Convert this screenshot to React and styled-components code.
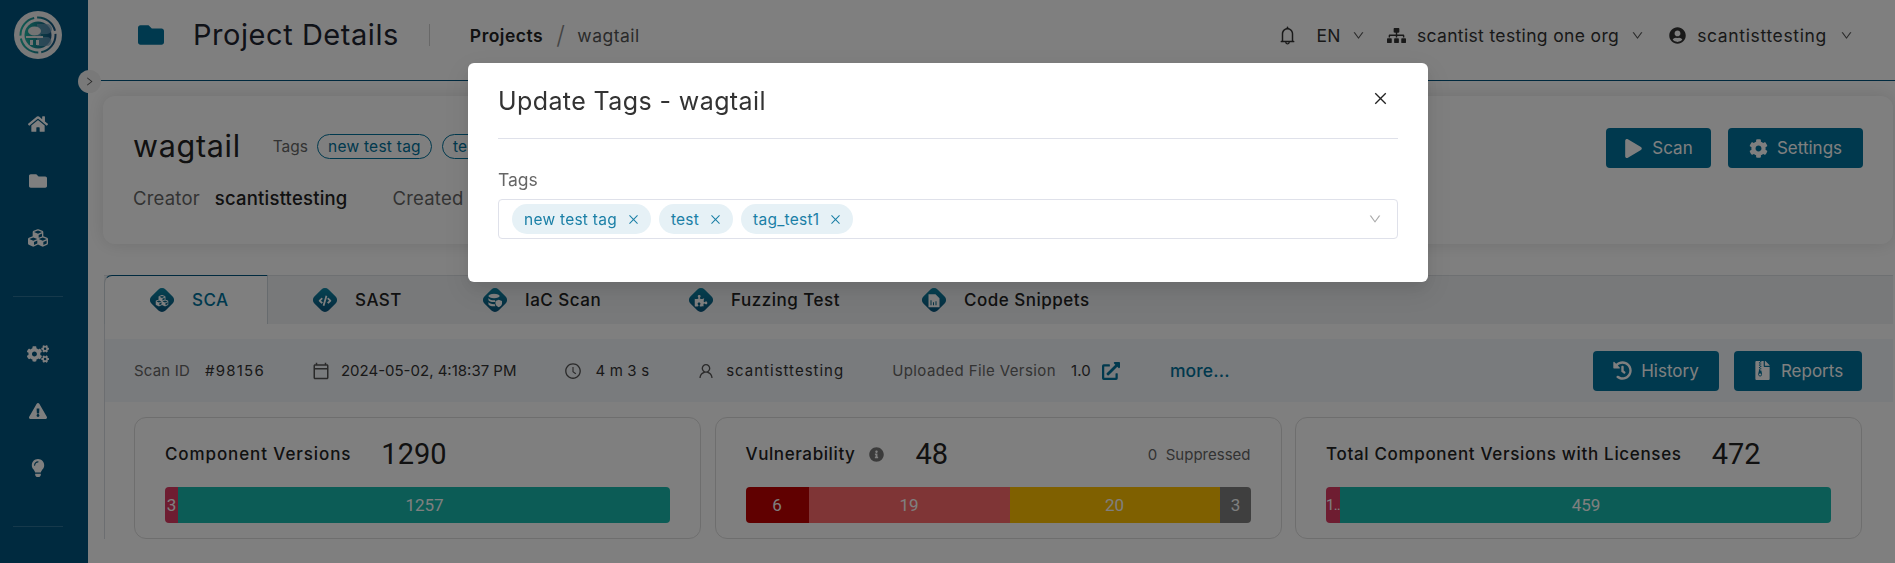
import React from 'react';
import styled, { createGlobalStyle } from 'styled-components';
import {
  FaHome, FaFolder, FaCubes, FaCogs, FaExclamationTriangle, FaLightbulb, FaPlay, FaCog, FaHistory,
  FaFileArchive, FaSitemap, FaUserCircle, FaInfoCircle, FaExternalLinkAlt, FaCode,
  FaPuzzlePiece,
} from 'react-icons/fa';
import { AiOutlineBell, AiOutlineDown, AiOutlineClose, AiOutlineClockCircle, AiOutlineUser, AiOutlineRight } from 'react-icons/ai';
import { MdOutlineCalendarToday } from 'react-icons/md';

const brand = '#00729c';
const navy = '#00547e';

const GlobalStyle = createGlobalStyle`
  html, body { margin: 0; height: 100%; overflow: hidden; }
  body { font-family: Inter, "Liberation Sans", sans-serif; color: #222; background: #fff; }
  * { box-sizing: border-box; }
`;

const Page = styled.div`
  display: flex;
  width: 1895px;
  height: 563px;
  overflow: hidden;
`;

// side navigation
const Sidebar = styled.aside`
  flex: 0 0 88px;
  background: ${navy};
  padding: 11px 13px 0 0;
  color: #fff;
`;

const LogoSlot = styled.div`
  display: flex;
  justify-content: center;
  height: 84.5px;
`;

const NavItem = styled.div`
  height: 57px;
  display: flex;
  align-items: center;
  justify-content: center;
  font-size: ${p => p.$size || 18}px;
`;

const NavDivider = styled.div`
  height: 59px;
  display: flex;
  align-items: center;
  justify-content: center;
  &::before {
    content: '';
    width: 50px;
    height: 1px;
    background: #2c7396;
  }
`;

const Main = styled.main`
  flex: 1;
  min-width: 0;
  position: relative;
`;

const Toggle = styled.div`
  position: absolute;
  left: -10px;
  top: 70px;
  width: 23px;
  height: 23px;
  border-radius: 50%;
  background: #f2f2f2;
  color: #555;
  font-size: 11px;
  display: flex;
  align-items: center;
  justify-content: center;
`;

// top bar
const Header = styled.header`
  height: 81px;
  margin-left: 13px;
  padding: 0 42px 10px 37px;
  border-bottom: 1px solid ${navy};
  display: flex;
  align-items: center;
`;

const TitleIcon = styled.span`
  color: ${brand};
  font-size: 26px;
  display: flex;
  margin-right: 29px;
`;

const Title = styled.h1`
  margin: 0;
  font-size: 29px;
  font-weight: 400;
  letter-spacing: 0.55px;
  color: #1f2430;
  padding-right: 30px;
  border-right: 1px solid #d0d0d0;
  line-height: 22px;
`;

const Crumbs = styled.div`
  margin-left: 40px;
  display: flex;
  align-items: center;
  font-size: 17.5px;
  letter-spacing: 0.5px;
`;

const CrumbStrong = styled.b`
  font-weight: 600;
  color: #222;
`;

const CrumbSlash = styled.span`
  margin: 0 12px 0 13px;
  font-size: 25px;
  font-weight: 300;
  color: #888;
  line-height: 20px;
`;

const CrumbText = styled.span`
  color: #555;
`;

const HeaderRight = styled.div`
  margin-left: auto;
  display: flex;
  align-items: center;
  font-size: 17.5px;
  color: #333;
`;

const HeaderItem = styled.div`
  display: flex;
  align-items: center;
  gap: 11px;
  letter-spacing: ${p => p.$track || 0.4}px;
  margin-left: ${p => p.$left || 0}px;
  svg { flex: none; }
`;

const Caret = styled(AiOutlineDown)`
  font-size: 13px;
  color: #555;
  margin-left: ${p => p.$left || 0}px;
`;

const Content = styled.div`
  padding: 15px 2px 0 15px;
`;

// project card
const ProjectCard = styled.section`
  height: 148px;
  background: #fff;
  border-radius: 12px;
  box-shadow: 0 0 18px rgba(0, 0, 0, 0.12);
  padding: 30px 30px 0 30px;
  display: flex;
  justify-content: space-between;
`;

const ProjectInfo = styled.div`
  display: flex;
  flex-direction: column;
  gap: 21px;
`;

const NameRow = styled.div`
  display: flex;
  align-items: center;
`;

const ProjectName = styled.div`
  font-size: 30.5px;
  letter-spacing: 0.7px;
  color: #222;
  margin-right: 32px;
  line-height: 40px;
`;

const TagsLabel = styled.span`
  font-size: 15.5px;
  color: #666;
  margin-right: 9px;
`;

const OutlineTag = styled.span`
  height: 25px;
  padding: 0 10px;
  border: 1px solid ${brand};
  border-radius: 13px;
  font-size: 15.5px;
  letter-spacing: 0.25px;
  color: ${brand};
  display: flex;
  align-items: center;
  margin-right: 10px;
`;

const MetaRow = styled.div`
  display: flex;
  align-items: center;
  font-size: 18.5px;
  letter-spacing: 0.2px;
  color: #222;
`;

const MetaLabel = styled.span`
  color: #666;
  margin-right: ${p => p.$gap || 15}px;
`;

const MetaValue = styled.span`
  margin-right: 45px;
  font-weight: 500;
`;

const Buttons = styled.div`
  display: flex;
  gap: ${p => p.$gap || 17}px;
  padding-top: ${p => p.$top || 2}px;
`;

const Button = styled.button`
  height: 40px;
  width: ${p => p.$width}px;
  border: 0;
  border-radius: 4px;
  background: ${brand};
  color: #fff;
  font: inherit;
  font-size: 17px;
  letter-spacing: 0;
  display: flex;
  align-items: center;
  justify-content: center;
  gap: 9px;
  svg { font-size: 19px; }
`;

// tabs
const TabBar = styled.div`
  margin-top: 31px;
  margin-left: 1px;
  height: 49px;
  display: flex;
  background: #f0f2f4;
  border-top: 1px solid #dde0e4;
`;

const Tab = styled.div`
  width: ${p => p.$width}px;
  flex: none;
  display: flex;
  align-items: center;
  gap: 17px;
  padding-left: ${p => p.$pad || 44}px;
  font-size: 17px;
  letter-spacing: 0.5px;
  font-weight: 500;
  color: ${p => (p.$active ? brand : '#222')};
  background: ${p => (p.$active ? '#fff' : 'transparent')};
  border: ${p => (p.$active ? '1px solid #cfd6dc' : '0')};
  border-top-color: ${navy};
  border-bottom: 0;
  border-radius: 8px 0 0 0;
  margin-top: ${p => (p.$active ? '-1px' : '0')};
`;

const Diamond = styled.span`
  flex: none;
  width: 20px;
  height: 20px;
  margin: 0 3px;
  border-radius: 5px;
  transform: rotate(45deg);
  background: linear-gradient(135deg, #0d8aa8, #0a4f78);
  display: flex;
  align-items: center;
  justify-content: center;
  color: #fff;
  font-size: 13px;
  svg { transform: rotate(-45deg); }
`;

const TabBody = styled.div`
  margin-left: 1px;
  border-left: 1px solid #d8dde2;
  padding-top: 15px;
`;

const ScanRow = styled.div`
  height: 63px;
  background: #f3f6fa;
  padding: 0 31px 0 29px;
  display: flex;
  align-items: center;
  font-size: 15px;
  letter-spacing: 0.15px;
  color: #333;
`;

const ScanLabel = styled.span`
  color: #666;
  letter-spacing: ${p => p.$track || 0.2}px;
  margin-right: ${p => p.$gap || 15}px;
`;

const ScanItem = styled.span`
  display: flex;
  align-items: center;
  gap: ${p => p.$gap || 11}px;
  letter-spacing: ${p => p.$track ?? 0.15}px;
  margin-right: ${p => p.$right || 0}px;
  svg { font-size: 18px; color: #555; flex: none; }
`;

const LinkIcon = styled(FaExternalLinkAlt)`
  && { color: ${brand}; }
`;

const MoreLink = styled.span`
  font-size: 17.5px;
  color: ${brand};
  font-weight: 500;
  margin-left: 50px;
`;

const ScanButtons = styled(Buttons)`
  margin-left: auto;
  gap: 15px;
  padding-top: 0;
`;

const Stats = styled.div`
  display: grid;
  grid-template-columns: repeat(3, 567px);
  gap: 13.5px;
  padding: 15px 0 0 29px;
`;

const StatCard = styled.div`
  height: 122px;
  border: 1px solid #ddd;
  border-radius: 12px;
  padding: 18px 30px 0;
`;

const StatHead = styled.div`
  height: 36px;
  display: flex;
  align-items: center;
`;

const StatLabel = styled.span`
  font-size: 17px;
  letter-spacing: ${p => p.$track || 0.67}px;
  font-weight: 500;
  color: #222;
  margin-right: ${p => p.$gap || 30}px;
`;

const InfoIcon = styled(FaInfoCircle)`
  font-size: 15px;
  color: #777;
  margin-right: 32px;
`;

const StatValue = styled.span`
  font-family: Roboto, sans-serif;
  font-size: 29px;
  color: #222;
`;

const Suppressed = styled.span`
  margin-left: auto;
  font-size: 15px;
  color: #666;
`;

const Bar = styled.div`
  margin-top: 15px;
  height: 36px;
  display: flex;
  border-radius: 4px;
  overflow: hidden;
`;

const Segment = styled.div`
  flex: 0 0 ${p => p.$width}px;
  background: ${p => p.$color};
  color: #fff;
  font-family: Roboto, sans-serif;
  font-size: ${p => (p.$tight ? 15 : 17)}px;
  letter-spacing: ${p => (p.$tight ? '-0.8px' : '0')};
  display: flex;
  align-items: center;
  justify-content: center;
  overflow: hidden;
`;

// modal over the dimmed page
const Backdrop = styled.div`
  position: fixed;
  inset: 0;
  background: rgba(0, 0, 0, 0.5);
`;

const Modal = styled.div`
  position: absolute;
  left: 468px;
  top: 63px;
  width: 960px;
  height: 219px;
  background: #fff;
  border-radius: 6px;
  padding: 0 30px;
  box-shadow: 0 6px 16px rgba(0, 0, 0, 0.08), 0 9px 28px 8px rgba(0, 0, 0, 0.05);
`;

const ModalHead = styled.div`
  height: 76px;
  border-bottom: 1px solid #dfe1ea;
  display: flex;
  align-items: center;
  justify-content: space-between;
`;

const ModalTitle = styled.h2`
  margin: 0;
  font-size: 25px;
  font-weight: 400;
  letter-spacing: 0.4px;
  color: #333;
`;

const CloseButton = styled(AiOutlineClose)`
  font-size: 17px;
  color: #222;
  margin-right: 9px;
  margin-top: -5px;
`;

const FieldLabel = styled.div`
  margin-top: 29px;
  font-size: 17.5px;
  line-height: 24px;
  color: #666;
`;

const SelectBox = styled.div`
  margin-top: 7px;
  height: 40px;
  border: 1px solid #dfe1ea;
  border-radius: 4px;
  padding: 0 15px 0 13px;
  display: flex;
  align-items: center;
  gap: 8px;
`;

const Chip = styled.span`
  height: 30px;
  padding: 0 11px 0 12px;
  border-radius: 15px;
  background: #e6f1f6;
  color: #1a7fa6;
  font-size: 15.5px;
  letter-spacing: 0.25px;
  display: flex;
  align-items: center;
  gap: 10px;
  svg { font-size: 13px; }
`;

const SelectCaret = styled(AiOutlineDown)`
  margin-left: auto;
  font-size: 14px;
  color: #aaa;
`;

const Logo = () => (
  <svg width="48" height="48" viewBox="0 0 48 48">
    <defs>
      <linearGradient id="logoFill" x1="0" x2="1" y1="0" y2="0">
        <stop offset="0" stopColor="#1fb5a3" />
        <stop offset="1" stopColor="#14527f" />
      </linearGradient>
    </defs>
    <circle cx="24" cy="24" r="24" fill="#f2f2f2" />
    <circle cx="24" cy="24" r="17.5" fill="none" stroke="url(#logoFill)" strokeWidth="2" strokeDasharray="24 3" />
    <circle cx="24" cy="24" r="13.5" fill="url(#logoFill)" />
    <path d="M23 13h10a3 3 0 0 1 0 10h-6a3 3 0 0 0 0 3h6a4 4 0 0 1 0 9H23z" fill="#6f9fbc" opacity="0.7" />
    <ellipse cx="20.5" cy="20" rx="6.5" ry="4.5" fill="#e9e9e9" />
    <rect x="12" y="25" width="17" height="2" fill="#e9e9e9" />
    <path d="M16 29h3v5h-3zM22 29h3v5h-3z" fill="#e9e9e9" />
  </svg>
);

const IacIcon = () => (
  <svg width="15" height="15" viewBox="0 0 16 16" fill="currentColor">
    <ellipse cx="7" cy="3" rx="6" ry="2.4" />
    <path d="M1 5v2.2c0 1.3 2.7 2.3 6 2.3h1V7.6H7C4 7.6 1.9 6.5 1 5zM1 9.4v2.4C1 13.1 3.7 14 7 14h1.4A5 5 0 0 1 8 11.8H7C4 11.8 1.9 10.8 1 9.4z" />
    <path d="M12 7l3.5 1.2v2.6c0 2-1.6 3.6-3.5 4.2-1.9-.6-3.5-2.2-3.5-4.2V8.2z" />
  </svg>
);

const SnippetIcon = () => (
  <svg width="13" height="15" viewBox="0 0 13 15" fill="currentColor">
    <path d="M1 1h7l4 4v9H1zM4 7H3v5h1zm2.5 2h-1v3h1zM9 8H8v4h1z" fillRule="evenodd" />
  </svg>
);

const tabs = [
  { label: 'SCA', icon: <FaCubes />, width: 164, active: true },
  { label: 'SAST', icon: <FaCode />, width: 193, pad: 44 },
  { label: 'IaC Scan', icon: <IacIcon />, width: 206, pad: 21 },
  { label: 'Fuzzing Test', icon: <FaPuzzlePiece />, width: 233, pad: 21 },
  { label: 'Code Snippets', icon: <SnippetIcon />, width: 260, pad: 21 },
];

const App = () => (
  <>
    <GlobalStyle />
    <Page>
      <Sidebar>
        <LogoSlot><Logo /></LogoSlot>
        <NavItem $size={20}><FaHome /></NavItem>
        <NavItem><FaFolder /></NavItem>
        <NavItem $size={20}><FaCubes /></NavItem>
        <NavDivider />
        <NavItem $size={22}><FaCogs /></NavItem>
        <NavItem><FaExclamationTriangle /></NavItem>
        <NavItem><FaLightbulb /></NavItem>
        <NavDivider />
      </Sidebar>
      <Main>
        <Toggle><AiOutlineRight /></Toggle>
        <Header>
          <TitleIcon><FaFolder /></TitleIcon>
          <Title>Project Details</Title>
          <Crumbs>
            <CrumbStrong>Projects</CrumbStrong>
            <CrumbSlash>/</CrumbSlash>
            <CrumbText>wagtail</CrumbText>
          </Crumbs>
          <HeaderRight>
            <HeaderItem><AiOutlineBell size={21} /></HeaderItem>
            <HeaderItem $left={18}>EN<Caret /></HeaderItem>
            <HeaderItem $left={22} $track={0.35}><FaSitemap size={19} />scantist testing one org<Caret $left={1} /></HeaderItem>
            <HeaderItem $left={25} $track={0.65}><FaUserCircle size={17} />scantisttesting<Caret $left={2} /></HeaderItem>
          </HeaderRight>
        </Header>
        <Content>
          <ProjectCard>
            <ProjectInfo>
              <NameRow>
                <ProjectName>wagtail</ProjectName>
                <TagsLabel>Tags</TagsLabel>
                <OutlineTag>new test tag</OutlineTag>
                <OutlineTag>test</OutlineTag>
              </NameRow>
              <MetaRow>
                <MetaLabel>Creator</MetaLabel>
                <MetaValue>scantisttesting</MetaValue>
                <MetaLabel>Created</MetaLabel>
              </MetaRow>
            </ProjectInfo>
            <Buttons>
              <Button $width={105}><FaPlay />Scan</Button>
              <Button $width={135}><FaCog />Settings</Button>
            </Buttons>
          </ProjectCard>
          <TabBar>
            {tabs.map(t => (
              <Tab key={t.label} $width={t.width} $active={t.active} $pad={t.pad}>
                <Diamond>{t.icon}</Diamond>
                {t.label}
              </Tab>
            ))}
          </TabBar>
          <TabBody>
            <ScanRow>
              <ScanLabel>Scan ID</ScanLabel>
              <ScanItem $right={47} $track={1.2}>#98156</ScanItem>
              <ScanItem $right={48} $track={0}><MdOutlineCalendarToday />2024-05-02, 4:18:37 PM</ScanItem>
              <ScanItem $right={48} $gap={13}><AiOutlineClockCircle />4 m 3 s</ScanItem>
              <ScanItem $right={48} $track={1}><AiOutlineUser />scantisttesting</ScanItem>
              <ScanLabel $track={0.4}>Uploaded File Version</ScanLabel>
              <ScanItem>1.0<LinkIcon /></ScanItem>
              <MoreLink>more...</MoreLink>
              <ScanButtons>
                <Button $width={126}><FaHistory />History</Button>
                <Button $width={128}><FaFileArchive />Reports</Button>
              </ScanButtons>
            </ScanRow>
            <Stats>
              <StatCard>
                <StatHead>
                  <StatLabel $track={0.9}>Component Versions</StatLabel>
                  <StatValue>1290</StatValue>
                </StatHead>
                <Bar>
                  <Segment $width={13} $color="#dc3a62">3</Segment>
                  <Segment $width={493} $color="#18b8ac">1257</Segment>
                </Bar>
              </StatCard>
              <StatCard>
                <StatHead>
                  <StatLabel $gap={13} $track={0.6}>Vulnerability</StatLabel>
                  <InfoIcon />
                  <StatValue>48</StatValue>
                  <Suppressed>0&nbsp;&nbsp;Suppressed</Suppressed>
                </StatHead>
                <Bar>
                  <Segment $width={63} $color="#c00000">6</Segment>
                  <Segment $width={201} $color="#ff6a6c">19</Segment>
                  <Segment $width={210} $color="#ffc000">20</Segment>
                  <Segment $width={32} $color="#7f7f7f">3</Segment>
                </Bar>
              </StatCard>
              <StatCard>
                <StatHead>
                  <StatLabel>Total Component Versions with Licenses</StatLabel>
                  <StatValue>472</StatValue>
                </StatHead>
                <Bar>
                  <Segment $width={14} $color="#dc3a62" $tight>1..</Segment>
                  <Segment $width={492} $color="#18b8ac">459</Segment>
                </Bar>
              </StatCard>
            </Stats>
          </TabBody>
        </Content>
      </Main>
    </Page>
    <Backdrop>
      <Modal>
        <ModalHead>
          <ModalTitle>Update Tags - wagtail</ModalTitle>
          <CloseButton />
        </ModalHead>
        <FieldLabel>Tags</FieldLabel>
        <SelectBox>
          <Chip>new test tag<AiOutlineClose /></Chip>
          <Chip>test<AiOutlineClose /></Chip>
          <Chip>tag_test1<AiOutlineClose /></Chip>
          <SelectCaret />
        </SelectBox>
      </Modal>
    </Backdrop>
  </>
);

export default App;
